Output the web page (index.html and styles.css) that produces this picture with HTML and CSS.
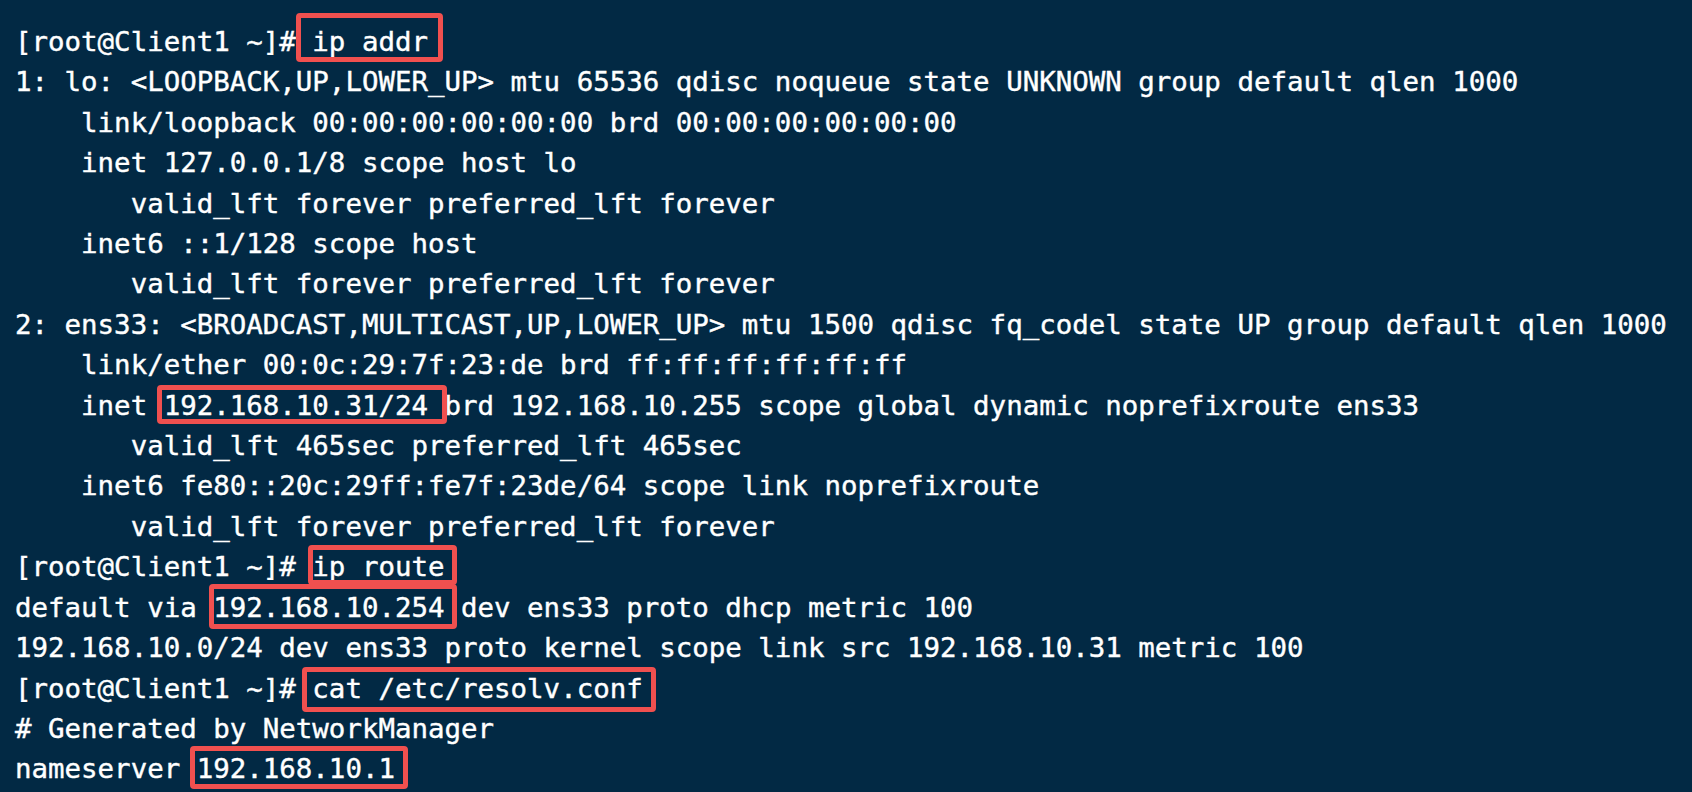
FILE: index.html
```html
<!DOCTYPE html>
<html lang="en">
<head>
<meta charset="utf-8">
<title>Terminal</title>
<link rel="stylesheet" href="styles.css">
</head>
<body>
<div class="term">
<div class="ln">[root@Client1 ~]# <span class="hl hl-1">ip addr</span></div>
<div class="ln">1: lo: &lt;LOOPBACK,UP,LOWER_UP&gt; mtu 65536 qdisc noqueue state UNKNOWN group default qlen 1000</div>
<div class="ln">    link/loopback 00:00:00:00:00:00 brd 00:00:00:00:00:00</div>
<div class="ln">    inet 127.0.0.1/8 scope host lo</div>
<div class="ln">       valid_lft forever preferred_lft forever</div>
<div class="ln">    inet6 ::1/128 scope host</div>
<div class="ln">       valid_lft forever preferred_lft forever</div>
<div class="ln">2: ens33: &lt;BROADCAST,MULTICAST,UP,LOWER_UP&gt; mtu 1500 qdisc fq_codel state UP group default qlen 1000</div>
<div class="ln">    link/ether 00:0c:29:7f:23:de brd ff:ff:ff:ff:ff:ff</div>
<div class="ln">    inet <span class="hl hl-2">192.168.10.31/24</span> brd 192.168.10.255 scope global dynamic noprefixroute ens33</div>
<div class="ln">       valid_lft 465sec preferred_lft 465sec</div>
<div class="ln">    inet6 fe80::20c:29ff:fe7f:23de/64 scope link noprefixroute</div>
<div class="ln">       valid_lft forever preferred_lft forever</div>
<div class="ln">[root@Client1 ~]# <span class="hl hl-3">ip route</span></div>
<div class="ln">default via <span class="hl hl-4">192.168.10.254</span> dev ens33 proto dhcp metric 100</div>
<div class="ln">192.168.10.0/24 dev ens33 proto kernel scope link src 192.168.10.31 metric 100</div>
<div class="ln">[root@Client1 ~]# <span class="hl hl-5">cat /etc/resolv.conf</span></div>
<div class="ln"># Generated by NetworkManager</div>
<div class="ln">nameserver <span class="hl hl-6">192.168.10.1</span></div>
</div>
</body>
</html>
```

FILE: styles.css
```css
html, body {
  margin: 0;
  padding: 0;
  background: #022944;
}

body {
  height: 792px;
  overflow: hidden;
}

.term {
  padding: 22px 0 0 15px;
  font-family: "DejaVu Sans Mono", "Liberation Mono", monospace;
  font-size: 27.45px;
  line-height: 40.4px;
  color: #ffffff;
  -webkit-text-stroke: 0.4px #ffffff;
}

.ln {
  white-space: pre;
}

.hl {
  position: relative;
}

.hl::after {
  content: "";
  position: absolute;
  border: 5px solid #f0504f;
  border-radius: 4px;
}

.hl-1::after { left: -16.5px; right: -15px; top: -13.5px; bottom: -4.8px; }
.hl-2::after { left: -6.7px; right: -18.9px; top: -4.8px; bottom: -3.2px; }
.hl-3::after { left: -4.5px; right: -12.4px; top: -6.4px; bottom: -3px; }
.hl-4::after { left: -4.3px; right: -12.4px; top: -7.5px; bottom: -6.2px; }
.hl-5::after { left: -10.8px; right: -13px; top: -5.6px; bottom: -8.4px; }
.hl-6::after { left: -6.8px; right: -12.9px; top: -7.4px; bottom: -4.6px; }
```
